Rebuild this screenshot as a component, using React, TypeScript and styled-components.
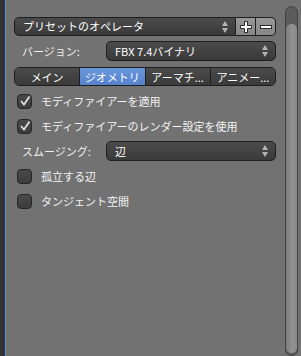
import styled, { createGlobalStyle } from 'styled-components'

const Global = createGlobalStyle`
  html, body {
    margin: 0;
    padding: 0;
    background: #727272;
    overflow: hidden;
  }
  * {
    box-sizing: border-box;
  }
`

const Window = styled.div`
  display: flex;
  width: 301px;
  height: 356px;
  background: #727272;
  font-family: 'Noto Sans CJK JP', 'Noto Sans', sans-serif;
  font-size: 11px;
  color: #f2f2f2;
`

const EdgeStrip = styled.div`
  width: 6px;
  background: #333333;
  border-right: 1px solid #5a93d6;
`

const Panel = styled.div`
  flex: 1;
  padding: 17px 9px 0 8px;
  display: flex;
  flex-direction: column;
  gap: 5px;
`

const Row = styled.div<{ $h?: number }>`
  display: flex;
  align-items: center;
  height: ${(p) => p.$h ?? 20}px;
`

const Menu = styled.div<{ $roundRight?: boolean }>`
  flex: 1;
  height: 100%;
  display: flex;
  align-items: center;
  padding: 0 6px 0 8px;
  border: 1px solid #1e1e1e;
  border-radius: ${(p) => (p.$roundRight === false ? '5px 0 0 5px' : '5px')};
  background: linear-gradient(#4b4b4b, #3a3a3a);
  color: #ffffff;
  white-space: nowrap;
`

const MenuText = styled.span`
  flex: 1;
  line-height: 1;
`

const Label = styled.div`
  width: 92px;
  padding-left: 8px;
  color: #f0f0f0;
  white-space: nowrap;
`

const IconButton = styled.div<{ $last?: boolean }>`
  width: 20px;
  height: 100%;
  display: flex;
  align-items: center;
  justify-content: center;
  border: 1px solid #1e1e1e;
  border-left: none;
  border-radius: ${(p) => (p.$last ? '0 5px 5px 0' : '0')};
  background: linear-gradient(#989898, #868686);
`

const Tabs = styled.div`
  display: flex;
  height: 19px;
  margin-top: 1px;
  border: 1px solid #1e1e1e;
  border-radius: 5px;
  overflow: hidden;
`

const Tab = styled.div<{ $active?: boolean }>`
  flex: 1;
  display: flex;
  align-items: center;
  justify-content: center;
  color: #ffffff;
  white-space: nowrap;
  background: ${(p) =>
    p.$active
      ? 'linear-gradient(#6a97dc, #5582cb)'
      : 'linear-gradient(#4b4b4b, #3a3a3a)'};
  & + & {
    border-left: 1px solid #1e1e1e;
  }
`

const CheckRow = styled.div`
  display: flex;
  align-items: center;
  gap: 9px;
  height: 20px;
  padding-left: 3px;
  color: #f2f2f2;
`

const Box = styled.div`
  width: 15px;
  height: 15px;
  border: 1px solid #262626;
  border-radius: 4px;
  background: linear-gradient(#4a4a4a, #3c3c3c);
  display: flex;
  align-items: center;
  justify-content: center;
`

const ScrollArea = styled.div`
  width: 16px;
  padding: 6px 3px 0 0;
  display: flex;
`

const Track = styled.div`
  flex: 1;
  border: 1px solid #404040;
  border-radius: 7px;
  background: #5c5c5c;
  padding-top: 16px;
  display: flex;
`

const Thumb = styled.div`
  flex: 1;
  border-radius: 6px;
  margin-bottom: 2px;
  border-top: 1px solid #5a5a5a;
  background: linear-gradient(90deg, #7c7c7c, #939393 60%, #8a8a8a);
`

const UpDown = () => (
  <svg width="8" height="14" viewBox="0 0 8 14">
    <path d="M4 1 L7 6 L1 6 Z" fill="#b4b4b4" />
    <path d="M4 13 L7 8 L1 8 Z" fill="#b4b4b4" />
  </svg>
)

const Plus = () => (
  <svg width="14" height="14" viewBox="0 0 14 14">
    <path
      d="M5.5 1.5 H8.5 V5.5 H12.5 V8.5 H8.5 V12.5 H5.5 V8.5 H1.5 V5.5 H5.5 Z"
      fill="#ffffff"
      stroke="#2a2a2a"
      strokeWidth="1"
    />
  </svg>
)

const Minus = () => (
  <svg width="14" height="14" viewBox="0 0 14 14">
    <rect x="1.5" y="5.5" width="11" height="3" fill="#ffffff" stroke="#2a2a2a" strokeWidth="1" />
  </svg>
)

const Check = ({ on }: { on?: boolean }) => (
  <Box>
    {on && (
      <svg width="12" height="12" viewBox="0 0 12 12">
        <path d="M2 6 L5 9.5 L10.5 1.5" fill="none" stroke="#e0e0e0" strokeWidth="1.8" />
      </svg>
    )}
  </Box>
)

const Menus = {
  preset: 'プリセットのオペレータ',
  version: 'FBX 7.4バイナリ',
  smoothing: '辺',
}

const tabs = ['メイン', 'ジオメトリ', 'アーマチ...', 'アニメー...']

const App = () => {
  return (
    <Window>
      <Global />
      <EdgeStrip />
      <Panel>
        <Row $h={19}>
          <Menu $roundRight={false}>
            <MenuText>{Menus.preset}</MenuText>
            <UpDown />
          </Menu>
          <IconButton>
            <Plus />
          </IconButton>
          <IconButton $last>
            <Minus />
          </IconButton>
        </Row>
        <Row>
          <Label>バージョン:</Label>
          <Menu>
            <MenuText>{Menus.version}</MenuText>
            <UpDown />
          </Menu>
        </Row>
        <Tabs>
          {tabs.map((t, i) => (
            <Tab key={t} $active={i === 1}>
              {t}
            </Tab>
          ))}
        </Tabs>
        <CheckRow>
          <Check on />
          モディファイアーを適用
        </CheckRow>
        <CheckRow>
          <Check on />
          モディファイアーのレンダー設定を使用
        </CheckRow>
        <Row>
          <Label>スムージング:</Label>
          <Menu>
            <MenuText>{Menus.smoothing}</MenuText>
            <UpDown />
          </Menu>
        </Row>
        <CheckRow>
          <Check />
          孤立する辺
        </CheckRow>
        <CheckRow>
          <Check />
          タンジェント空間
        </CheckRow>
      </Panel>
      <ScrollArea>
        <Track>
          <Thumb />
        </Track>
      </ScrollArea>
    </Window>
  )
}

export default App
